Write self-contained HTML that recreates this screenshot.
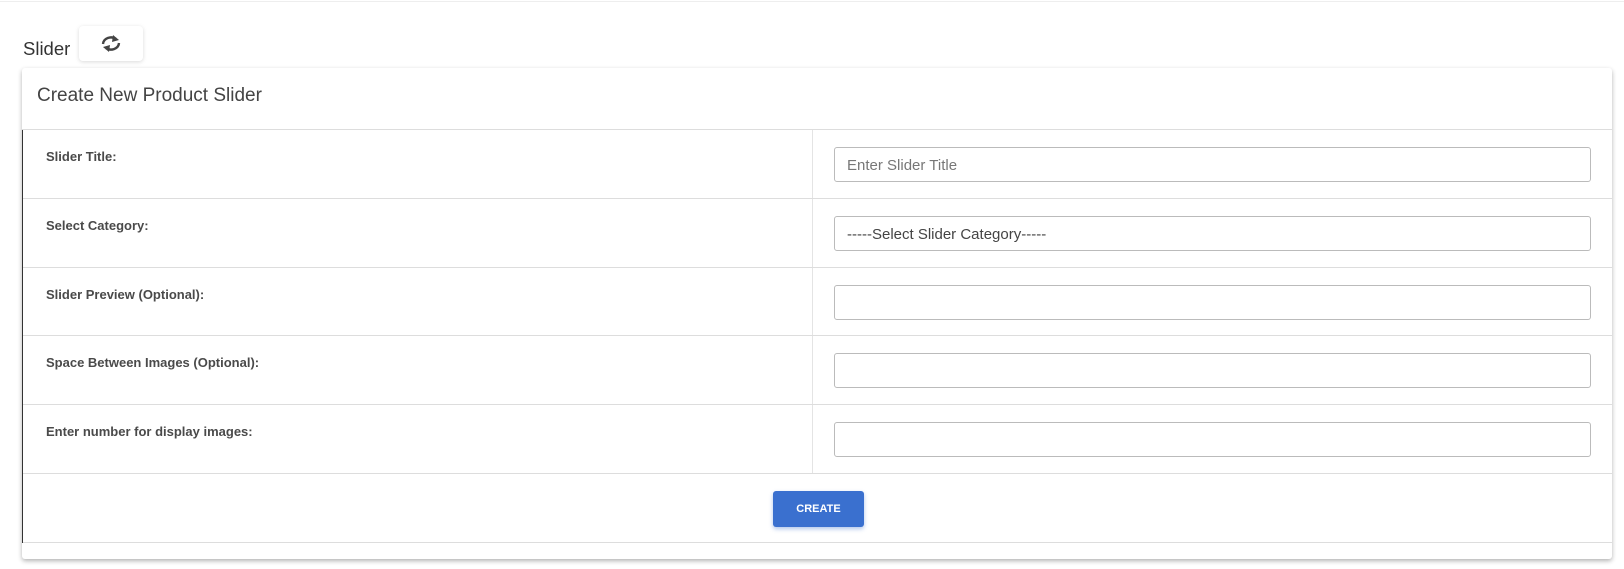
<!DOCTYPE html>
<html><head><style>
*{box-sizing:border-box;margin:0;padding:0}
body{width:1624px;height:569px;background:#fff;font-family:"Liberation Sans",sans-serif;position:relative;overflow:hidden;color:#444}
.top{position:absolute;left:0;top:0;width:1624px;height:2px;border-bottom:1px solid #eee}
.t{position:absolute;left:23px;top:38px;font-size:18.5px;color:#333}
.rb{position:absolute;left:79px;top:26px;width:64px;height:35px;background:#fff;border-radius:4px;box-shadow:0 1px 4px rgba(0,0,0,.15)}
.card{position:absolute;left:22px;top:68px;width:1590px;height:491px;background:#fff;border-radius:3px;box-shadow:0 2px 5px rgba(0,0,0,.3)}
.hd{height:62px;border-bottom:1px solid #ddd;padding:17px 15px;font-size:19px;color:#444}
.tbl{position:absolute;left:0;top:62px;width:1590px;border-left:1.5px solid #333}
.row{height:68.8px;border-bottom:1px solid #ddd;position:relative}
.row .l{position:absolute;left:23px;top:19px;font-size:13px;color:#4a4a4a;font-weight:bold}
.row .d{position:absolute;left:789px;top:0;bottom:0;border-left:1px solid #e4e4e4}
.row .i{position:absolute;left:811px;top:17px;width:757px;height:35px;border:1px solid #bbb;border-radius:3px;padding:9px 12px 0;font-size:15px;color:#666}
.ft{height:69px;border-bottom:1px solid #ddd;position:relative}
.btn{position:absolute;left:750px;top:17px;width:91px;height:36px;background:#3a70cf;border-radius:3px;color:#fff;font-size:11px;font-weight:bold;text-align:center;line-height:36px;box-shadow:0 2px 4px rgba(58,112,207,.4)}
</style></head><body>
<div class="top"></div>
<div class="t">Slider</div>
<div class="rb"><svg width="64" height="35" viewBox="0 0 64 35"><g fill="none" stroke="#444" stroke-width="2.4"><path d="M24 18a8 7 0 0 1 13-5"/><path d="M40 17a8 7 0 0 1-13 5"/></g><path d="M34 9l6 5-7 2z" fill="#444"/><path d="M30 26l-6-5 7-2z" fill="#444"/></svg></div>
<div class="card">
<div class="hd">Create New Product Slider</div>
<div class="tbl">
<div class="row"><div class="l">Slider Title:</div><div class="d"></div><div class="i" style="color:#777">Enter Slider Title</div></div>
<div class="row"><div class="l">Select Category:</div><div class="d"></div><div class="i" style="color:#444">-----Select Slider Category-----</div></div>
<div class="row"><div class="l">Slider Preview (Optional):</div><div class="d"></div><div class="i"></div></div>
<div class="row"><div class="l">Space Between Images (Optional):</div><div class="d"></div><div class="i"></div></div>
<div class="row"><div class="l">Enter number for display images:</div><div class="d"></div><div class="i"></div></div>
<div class="ft"><div class="btn">CREATE</div></div>
</div>
</div>
</body></html>
